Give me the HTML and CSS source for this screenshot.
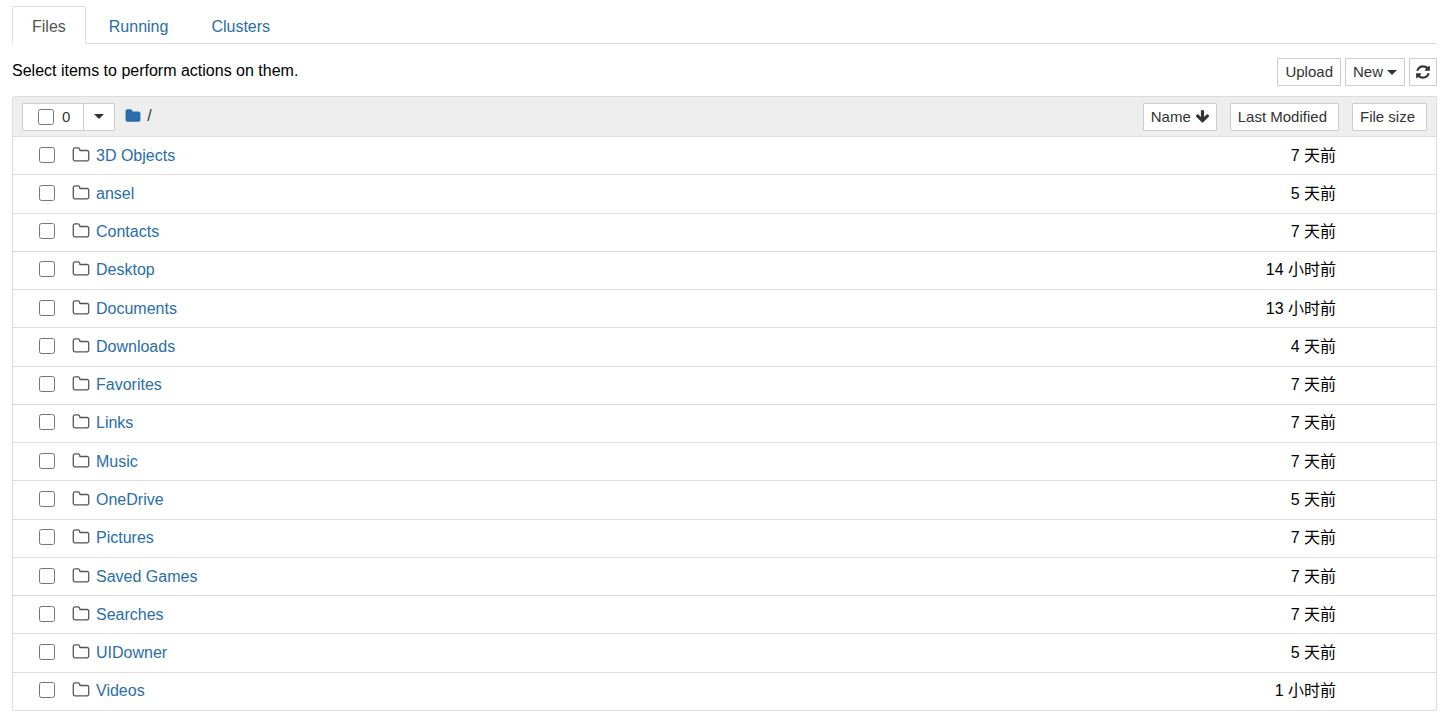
FILE: index.html
```html
<!DOCTYPE html>
<html lang="zh-CN">

<head>
  <meta charset="utf-8">
  <title>Home</title>
  <link rel="stylesheet" href="styles.css">
</head>

<body>

  <!-- Icon shapes shared by the page -->
  <svg class="sprite" aria-hidden="true">
    <symbol id="folder-o" viewBox="0 0 1792 1792">
      <path d="M1600 1312v-704q0-40-28-68t-68-28h-704q-40 0-68-28t-28-68v-64q0-40-28-68t-68-28h-320q-40 0-68 28t-28 68v960q0 40 28 68t68 28h1216q40 0 68-28t28-68zm128-704v704q0 92-66 158t-158 66h-1216q-92 0-158-66t-66-158v-960q0-92 66-158t158-66h320q92 0 158 66t66 158v32h672q92 0 158 66t66 158z"/>
    </symbol>
    <symbol id="folder" viewBox="0 0 1792 1792">
      <path d="M1728 608v704q0 92-66 158t-158 66h-1216q-92 0-158-66t-66-158v-960q0-92 66-158t158-66h320q92 0 158 66t66 158v32h672q92 0 158 66t66 158z"/>
    </symbol>
    <symbol id="arrow-down" viewBox="0 0 1792 1792">
      <path d="M1675 832q0 53-37 90l-651 652q-39 37-91 37-53 0-90-37l-651-652q-38-36-38-90 0-53 38-91l74-75q39-37 91-37 53 0 90 37l294 294v-704q0-52 38-90t90-38h128q52 0 90 38t38 90v704l294-294q37-37 90-37 52 0 91 37l75 75q37 39 37 91z"/>
    </symbol>
    <symbol id="refresh" viewBox="0 0 1792 1792">
      <path d="M1639 1056q0 5-1 7-64 268-268 434.5t-478 166.5q-146 0-282.5-55t-243.5-157l-129 129q-19 19-45 19t-45-19-19-45v-448q0-26 19-45t45-19h448q26 0 45 19t19 45-19 45l-137 137q71 66 161 102t187 36q134 0 250-65t186-179q11-17 53-117 8-23 30-23h192q13 0 22.5 9.5t9.5 22.5zm25-800v448q0 26-19 45t-45 19h-448q-26 0-45-19t-19-45 19-45l138-138q-148-137-349-137-134 0-250 65t-186 179q-11 17-53 117-8 23-30 23h-199q-13 0-22.5-9.5t-9.5-22.5v-7q65-268 270-434.5t480-166.5q146 0 284 55.5t245 156.5l130-129q19-19 45-19t45 19 19 45z"/>
    </symbol>
  </svg>

  <nav class="tabs">
    <a class="tab active" href="#notebooks">Files</a>
    <a class="tab" href="#running">Running</a>
    <a class="tab" href="#clusters">Clusters</a>
  </nav>

  <div class="toolbar">
    <p class="info">Select items to perform actions on them.</p>
    <div class="toolbar-buttons">
      <button class="btn" type="button">Upload</button>
      <button class="btn" type="button">New <span class="caret"></span></button>
      <button class="btn btn-refresh" type="button" aria-label="Refresh"><svg class="icon"><use href="#refresh"/></svg></button>
    </div>
  </div>

  <main class="list">
    <div class="list-header">
      <div class="select-group">
        <label class="btn select-all"><input class="checkbox" type="checkbox"> 0</label>
        <button class="btn select-menu" type="button" aria-label="Select"><span class="caret"></span></button>
      </div>
      <div class="breadcrumb">
        <a href="#root" aria-label="Root"><svg class="icon"><use href="#folder"/></svg></a>
        <span>/</span>
      </div>
      <div class="sort-buttons">
        <button class="btn btn-name" type="button">Name <svg class="icon"><use href="#arrow-down"/></svg></button>
        <button class="btn btn-sort" type="button">Last Modified</button>
        <button class="btn btn-sort" type="button">File size</button>
      </div>
    </div>
    <ul class="items"></ul>
  </main>

  <script>
    const items = document.querySelector('.items');

    const folders = [
      { name: '3D Objects', modified: '7 天前' },
      { name: 'ansel', modified: '5 天前' },
      { name: 'Contacts', modified: '7 天前' },
      { name: 'Desktop', modified: '14 小时前' },
      { name: 'Documents', modified: '13 小时前' },
      { name: 'Downloads', modified: '4 天前' },
      { name: 'Favorites', modified: '7 天前' },
      { name: 'Links', modified: '7 天前' },
      { name: 'Music', modified: '7 天前' },
      { name: 'OneDrive', modified: '5 天前' },
      { name: 'Pictures', modified: '7 天前' },
      { name: 'Saved Games', modified: '7 天前' },
      { name: 'Searches', modified: '7 天前' },
      { name: 'UIDowner', modified: '5 天前' },
      { name: 'Videos', modified: '1 小时前' }
    ];

    folders.forEach(folder => {
      const row = document.createElement('li');
      row.classList.add('item');
      row.innerHTML = `
        <input class="checkbox" type="checkbox" aria-label="${folder.name}">
        <svg class="icon-folder"><use href="#folder-o"/></svg>
        <a class="item-name" href="#${encodeURIComponent(folder.name)}">${folder.name}</a>
        <span class="item-modified">${folder.modified}</span>
      `;
      items.appendChild(row);
    });
  </script>

</body>

</html>
```
FILE: styles.css
```css
* {
  box-sizing: border-box;
}

body {
  display: flex;
  flex-direction: column;
  min-height: 100vh;
  margin: 0;
  padding: 6px 5px 1px 12px;
  font-family: "Liberation Sans", Arial, "Noto Sans CJK SC", sans-serif;
  font-size: 16px;
  line-height: 22px;
  color: #000;
  background-color: #fff;
}

a {
  color: #296eaa;
  text-decoration: none;
}

.sprite {
  position: absolute;
  width: 0;
  height: 0;
}

/* Tabs */

.tabs {
  display: flex;
  gap: 3px;
  border-bottom: 1px solid #ddd;
}

.tab {
  margin-bottom: -1px;
  padding: 9px 19px 5px;
  border: 1px solid transparent;
  border-radius: 2px 2px 0 0;
}

.tab.active {
  color: #555;
  background-color: #fff;
  border-color: #ddd;
  border-bottom-color: #fff;
}

/* Buttons */

.btn {
  display: inline-flex;
  align-items: center;
  gap: 4px;
  height: 28px;
  padding: 0 7px;
  border: 1px solid #ccc;
  border-radius: 1px;
  font-family: inherit;
  font-size: 15px;
  line-height: 20px;
  color: #333;
  background-color: #fff;
  cursor: pointer;
}

.caret {
  border-top: 5px solid;
  border-left: 5px solid transparent;
  border-right: 5px solid transparent;
}

.icon {
  width: 16px;
  height: 16px;
  fill: currentColor;
}

.checkbox {
  width: 16px;
  height: 16px;
  margin: 0;
}

/* Toolbar */

.toolbar {
  display: flex;
  justify-content: space-between;
  padding: 14px 0 10px;
}

.info {
  margin: 2px 0 0;
}

.toolbar-buttons {
  display: flex;
  gap: 4px;
}

.btn-refresh {
  padding: 0 5px;
}

/* File list */

.list {
  display: flex;
  flex: 1;
  flex-direction: column;
  border: 1px solid #ddd;
  border-radius: 2px;
}

.list-header {
  display: flex;
  align-items: center;
  height: 40px;
  padding: 0 9px;
  border-bottom: 1px solid #ddd;
  background-color: #eee;
}

.select-group {
  display: flex;
}

.select-all {
  gap: 8px;
  padding: 0 13px 0 15px;
}

.select-menu {
  margin-left: -1px;
  padding: 0 10px;
}

.breadcrumb {
  display: flex;
  align-items: center;
  gap: 6px;
  padding: 0 0 2px 10px;
  color: #333;
}

.breadcrumb a {
  display: flex;
}

.sort-buttons {
  display: flex;
  gap: 13px;
  margin-left: auto;
}

.btn-name .icon {
  width: 15px;
  height: 15px;
}

.btn-name {
  padding-right: 6px;
}

.btn-sort {
  padding-right: 11px;
}

.items {
  display: flex;
  flex: 1;
  flex-direction: column;
  margin: 0;
  padding: 0;
  list-style: none;
}

.item {
  display: flex;
  flex: 1;
  align-items: center;
  padding: 0 100px 0 26px;
  border-bottom: 1px solid #ddd;
}

.item:last-child {
  border-bottom: none;
}

.item .checkbox {
  margin-bottom: 2px;
}

.icon-folder {
  width: 18px;
  height: 18px;
  margin: 0 6px 2px 17px;
  fill: #555;
}

.item-modified {
  margin-left: auto;
}
```
